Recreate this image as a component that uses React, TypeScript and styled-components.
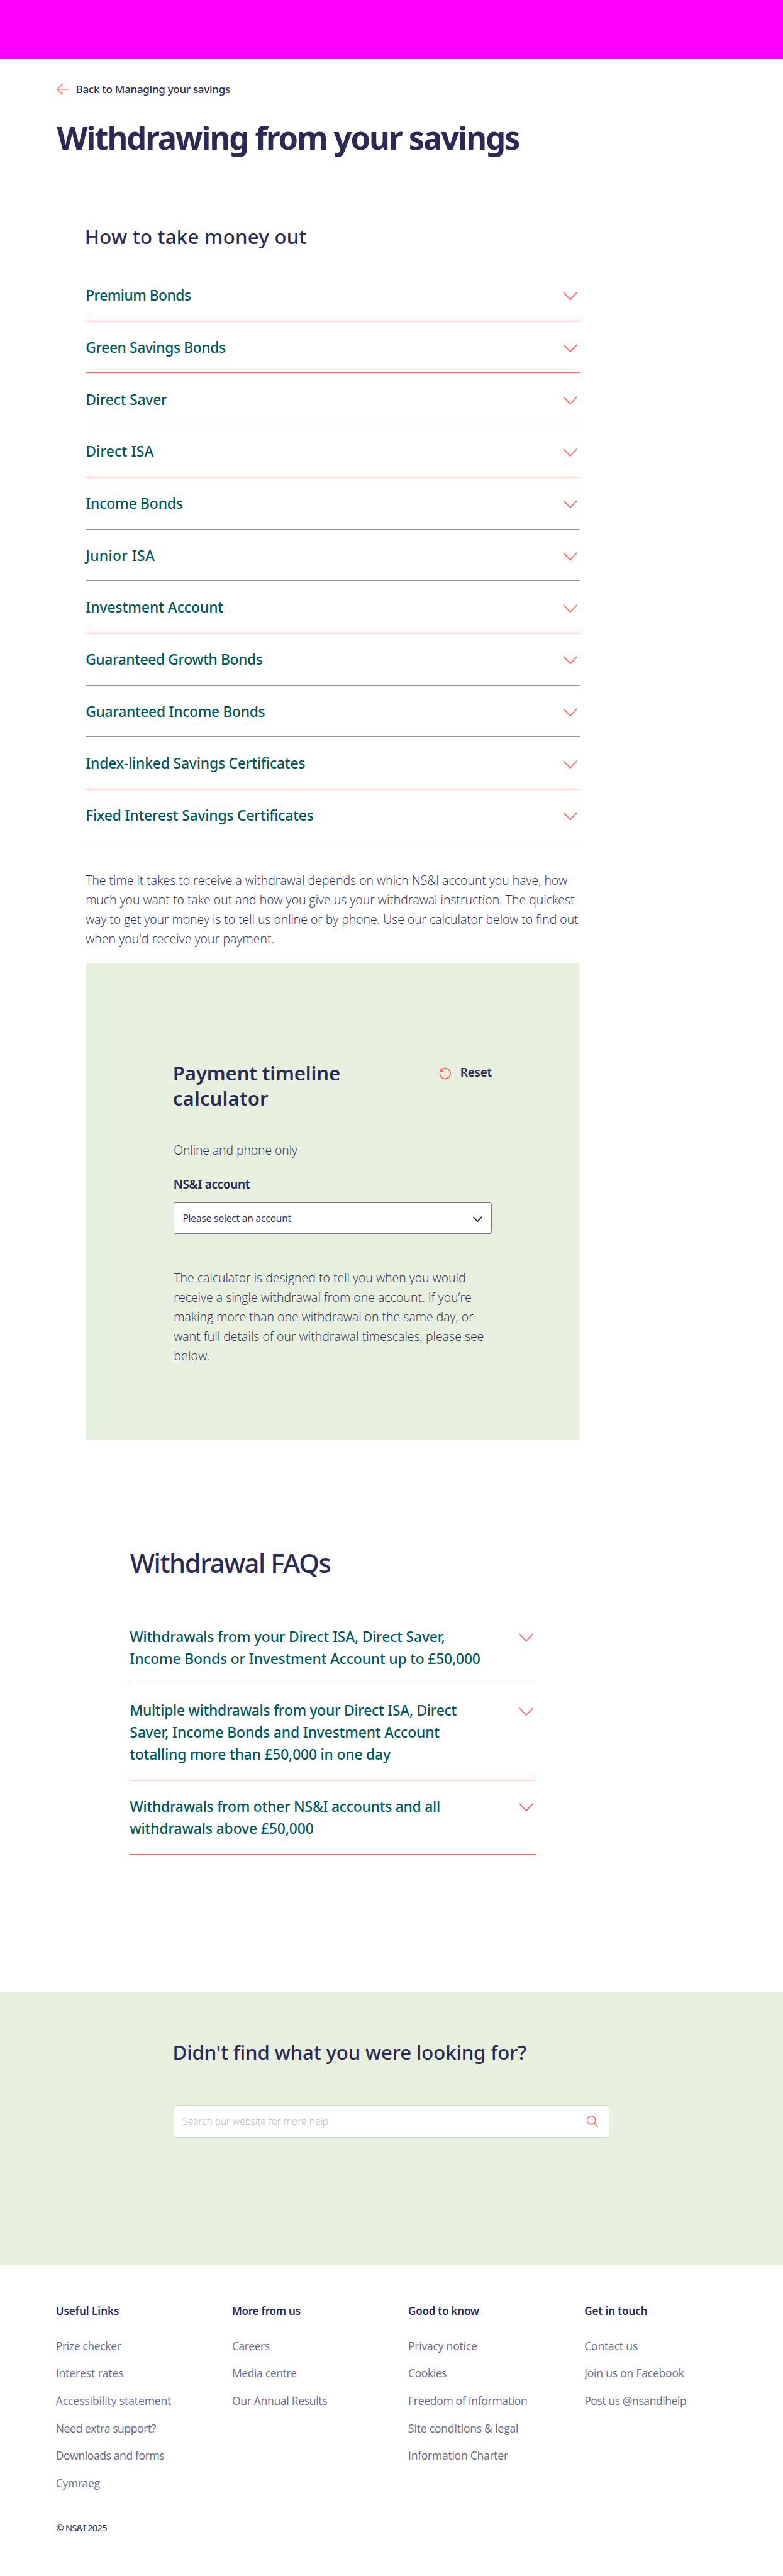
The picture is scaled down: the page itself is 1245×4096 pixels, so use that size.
import React from 'react';
import styled, { createGlobalStyle } from 'styled-components';

const navy = '#2a2a55';
const teal = '#00595a';
const coral = '#ff6561';
const sage = '#e8f0df';

const GlobalStyle = createGlobalStyle`
  html { font-size: 9.728px; background: #fff; }
  body { margin: 0; font-family: "Noto Sans", "Open Sans", sans-serif; color: ${navy}; }
  *, *::before, *::after { box-sizing: border-box; }
  h1, h2, h3, p, ul { margin: 0; padding: 0; font-weight: inherit; }
  ul { list-style: none; }
  a { color: inherit; text-decoration: none; }
  button { font: inherit; color: inherit; background: none; border: 0; padding: 0; text-align: left; }
`;

const Banner = styled.div`
  height: 9.68rem;
  background: #ff00ff;
`;

const Line = styled.span<{ $track?: number }>`
  display: block;
  white-space: nowrap;
  letter-spacing: ${(p) => (p.$track ?? 0) / 10000}em;
`;

const PageHeader = styled.header`
  padding: 3.67rem 9.2rem 0;
`;

const BackLink = styled.a`
  display: flex;
  align-items: center;
  gap: 1rem;
  height: 2.4rem;
  font-size: 1.75rem;
  font-weight: 500;
  line-height: 2.4rem;
  letter-spacing: -0.0171em;
  svg { width: 2.2rem; height: 2rem; flex: none; }
`;

const PageTitle = styled.h1`
  margin-top: 3.6rem;
  padding-left: 0.1rem;
  font-size: 5.2rem;
  font-weight: 700;
  line-height: 6.4rem;
  letter-spacing: -0.0398em;
`;

const Main = styled.main`
  width: 80.8rem;
  margin: 10.91rem 0 0 14rem;
`;

const SectionTitle = styled.h2`
  font-size: 3.2rem;
  font-weight: 500;
  line-height: 4rem;
  letter-spacing: 0.0091em;
  margin-left: -0.15rem;
`;

const Accordion = styled.ul<{ $top: number }>`
  margin-top: ${(p) => p.$top}rem;
`;

const AccordionItem = styled.li`
  border-bottom: 1px solid ${coral};
  padding-bottom: calc(0.1rem - 1px);
`;

const AccordionButton = styled.button`
  display: flex;
  justify-content: space-between;
  align-items: flex-start;
  width: 100%;
  padding: 2.48rem 0.35rem 2.32rem 0;
  color: ${teal};
  font-size: 2.35rem;
  font-weight: 500;
  line-height: 3.6rem;
  svg { width: 2.4rem; height: 1.4rem; margin-top: 1.27rem; flex: none; }
`;

const BodyText = styled.p<{ $top: number }>`
  margin-top: ${(p) => p.$top}rem;
  font-family: "Open Sans", "Noto Sans", sans-serif;
  font-size: 2rem;
  font-weight: 300;
  line-height: 3.2rem;
`;

const Calculator = styled.section`
  margin-top: 2.48rem;
  height: 77.8rem;
  padding: 15.9rem 14.4rem 0;
  background: ${sage};
`;

const CalculatorHead = styled.div`
  display: flex;
  justify-content: space-between;
  align-items: flex-start;
`;

const CalculatorTitle = styled.h3`
  margin-left: -0.15rem;
  font-size: 3.2rem;
  font-weight: 600;
  line-height: 4.1rem;
`;

const ResetButton = styled.button`
  display: flex;
  align-items: center;
  gap: 1.5rem;
  margin-top: 0.3rem;
  font-size: 1.95rem;
  font-weight: 600;
  line-height: 3.2rem;
  letter-spacing: -0.0104em;
  svg { width: 2rem; height: 2rem; margin-top: 0.3rem; flex: none; }
`;

const FieldLabel = styled.div`
  margin-top: 2.5rem;
  margin-left: -0.05rem;
  font-size: 1.95rem;
  font-weight: 600;
  line-height: 3.2rem;
  letter-spacing: -0.0165em;
`;

const SelectBox = styled.div`
  display: flex;
  align-items: center;
  justify-content: space-between;
  height: 5.15rem;
  margin-top: 1.3rem;
  padding: 0 1.5rem 0 1.35rem;
  border: 1px solid #777b7b;
  border-radius: 0.3rem;
  background: #fff;
  font-family: "Open Sans", "Noto Sans", sans-serif;
  font-size: 1.6rem;
  letter-spacing: -0.01em;
  svg { width: 1.5rem; height: 1rem; margin-top: 0.3rem; }
`;

const Faqs = styled.section`
  width: 66.4rem;
  margin: 17.53rem 0 0 21.2rem;
`;

const FaqTitle = styled.h2`
  font-size: 4.3rem;
  font-weight: 500;
  line-height: 5.2rem;
  letter-spacing: -0.0345em;
  padding-left: 0.05rem;
`;

const HelpBand = styled.section`
  margin-top: 22.4rem;
  height: 44.7rem;
  padding: 7.93rem 28.4rem 0;
  background: ${sage};
`;

const HelpTitle = styled.h2`
  margin-left: -0.18rem;
  font-size: 3.2rem;
  font-weight: 500;
  line-height: 4rem;
  white-space: nowrap;
  letter-spacing: -0.0034em;
`;

const SearchBox = styled.div`
  display: flex;
  align-items: center;
  justify-content: space-between;
  height: 5.37rem;
  margin-top: 6.57rem;
  padding: 0 1.65rem 0 1.35rem;
  border: 1px solid #d0d7ca;
  border-radius: 0.4rem;
  background: #fff;
  color: #b6b6bb;
  font-family: "Open Sans", "Noto Sans", sans-serif;
  font-size: 1.6rem;
  font-weight: 300;
  letter-spacing: -0.0041em;
  svg { width: 2rem; height: 2rem; }
`;

const Footer = styled.footer`
  padding: 6.36rem 9.2rem 0;
`;

const FooterColumns = styled.div`
  display: grid;
  grid-template-columns: repeat(4, 28.8rem);
`;

const FooterHeading = styled.h3`
  margin-bottom: 3.3rem;
  font-size: 1.75rem;
  font-weight: 600;
  line-height: 2.4rem;
  margin-left: -0.08rem;
`;

const FooterList = styled.ul`
  display: flex;
  flex-direction: column;
  gap: 2.09rem;
  margin-left: -0.08rem;
  color: #6a6b8a;
  font-family: "Open Sans", "Noto Sans", sans-serif;
  font-size: 1.8rem;
  line-height: 2.4rem;
`;

const Copyright = styled.p`
  margin-top: 5.05rem;
  padding-bottom: 4rem;
  font-size: 1.5rem;
  line-height: 2rem;
  letter-spacing: -0.0462em;
`;

type Text = [string, number];

const products: Text[] = [
  ['Premium Bonds', -245],
  ['Green Savings Bonds', -180],
  ['Direct Saver', -82],
  ['Direct ISA', 76],
  ['Income Bonds', -87],
  ['Junior ISA', 150],
  ['Investment Account', -27],
  ['Guaranteed Growth Bonds', -189],
  ['Guaranteed Income Bonds', -142],
  ['Index-linked Savings Certificates', -78],
  ['Fixed Interest Savings Certificates', -84],
];

const faqs: Text[][] = [
  [
    ['Withdrawals from your Direct ISA, Direct Saver,', -81],
    ['Income Bonds or Investment Account up to £50,000', -79],
  ],
  [
    ['Multiple withdrawals from your Direct ISA, Direct', -125],
    ['Saver, Income Bonds and Investment Account', -70],
    ['totalling more than £50,000 in one day', -80],
  ],
  [
    ['Withdrawals from other NS&I accounts and all', -111],
    ['withdrawals above £50,000', -54],
  ],
];

const intro: Text[] = [
  ['The time it takes to receive a withdrawal depends on which NS&I account you have, how', 1],
  ['much you want to take out and how you give us your withdrawal instruction. The quickest', 4],
  ['way to get your money is to tell us online or by phone. Use our calculator below to find out', -22],
  ["when you'd receive your payment.", 37],
];

const calculatorNote: Text[] = [
  ['The calculator is designed to tell you when you would', 7],
  ['receive a single withdrawal from one account. If you’re', 25],
  ['making more than one withdrawal on the same day, or', 9],
  ['want full details of our withdrawal timescales, please see', 23],
  ['below.', 120],
];

const footer: { heading: Text; links: Text[] }[] = [
  {
    heading: ['Useful Links', -8],
    links: [
      ['Prize checker', -192],
      ['Interest rates', -55],
      ['Accessibility statement', -48],
      ['Need extra support?', -222],
      ['Downloads and forms', -213],
      ['Cymraeg', -192],
    ],
  },
  {
    heading: ['More from us', -126],
    links: [
      ['Careers', -274],
      ['Media centre', -206],
      ['Our Annual Results', -168],
    ],
  },
  {
    heading: ['Good to know', -132],
    links: [
      ['Privacy notice', -119],
      ['Cookies', -231],
      ['Freedom of Information', -163],
      ['Site conditions & legal', -102],
      ['Information Charter', -140],
    ],
  },
  {
    heading: ['Get in touch', -55],
    links: [
      ['Contact us', -90],
      ['Join us on Facebook', -110],
      ['Post us @nsandihelp', -229],
    ],
  },
];

const Chevron = () => (
  <svg viewBox="0 0 24 14" fill="none" stroke={coral} strokeWidth="1.9" strokeLinecap="round">
    <path d="M1.4 1.4 12 12.4 22.6 1.4" />
  </svg>
);

const Lines = ({ items }: { items: Text[] }) => (
  <>
    {items.map(([text, track]) => (
      <Line key={text} $track={track}>{text}</Line>
    ))}
  </>
);

const Panel = ({ items }: { items: Text[] }) => (
  <AccordionItem>
    <AccordionButton>
      <span><Lines items={items} /></span>
      <Chevron />
    </AccordionButton>
  </AccordionItem>
);

export default function App() {
  return (
    <>
      <GlobalStyle />
      <Banner />
      <PageHeader>
        <BackLink href="#">
          <svg viewBox="0 0 22 20" fill="none" stroke={coral} strokeWidth="1.7" strokeLinecap="round" strokeLinejoin="round">
            <path d="M21 10H2.6M10.6 1.8 2.4 10l8.2 8.2" />
          </svg>
          Back to Managing your savings
        </BackLink>
        <PageTitle>Withdrawing from your savings</PageTitle>
      </PageHeader>
      <Main>
        <SectionTitle>How to take money out</SectionTitle>
        <Accordion $top={3.34}>
          {products.map((p) => <Panel key={p[0]} items={[p]} />)}
        </Accordion>
        <BodyText $top={4.72}><Lines items={intro} /></BodyText>
        <Calculator>
          <CalculatorHead>
            <CalculatorTitle>
              <Line $track={-39}>Payment timeline</Line>
              <Line $track={45}>calculator</Line>
            </CalculatorTitle>
            <ResetButton>
              <svg viewBox="0 0 20 20" fill="none" stroke={coral} strokeWidth="1.7" strokeLinecap="round" strokeLinejoin="round">
                <path d="M1.4 10.8a8.6 8.6 0 1 0 2.1-6.2L1.8 6.3M1.8 1.8v4.5h4.4" />
              </svg>
              Reset
            </ResetButton>
          </CalculatorHead>
          <BodyText $top={4.75}><Line $track={-50}>Online and phone only</Line></BodyText>
          <FieldLabel>NS&amp;I account</FieldLabel>
          <SelectBox>
            Please select an account
            <svg viewBox="0 0 15 10" fill="none" stroke="#111" strokeWidth="1.7" strokeLinecap="round">
              <path d="M1.1 1.4 7.5 8.6l6.4-7.2" />
            </svg>
          </SelectBox>
          <BodyText $top={5.52}><Lines items={calculatorNote} /></BodyText>
        </Calculator>
      </Main>
      <Faqs>
        <FaqTitle>Withdrawal FAQs</FaqTitle>
        <Accordion $top={5.17}>
          {faqs.map((f) => <Panel key={f[0][0]} items={f} />)}
        </Accordion>
      </Faqs>
      <HelpBand>
        <HelpTitle>Didn't find what you were looking for?</HelpTitle>
        <SearchBox>
          Search our website for more help
          <svg viewBox="0 0 20 20" fill="none" stroke={coral} strokeWidth="1.6" strokeLinecap="round">
            <circle cx="8.4" cy="8.4" r="6.9" />
            <path d="m13.4 13.6 5.2 5.2" />
          </svg>
        </SearchBox>
      </HelpBand>
      <Footer>
        <FooterColumns>
          {footer.map(({ heading, links }) => (
            <div key={heading[0]}>
              <FooterHeading><Line $track={heading[1]}>{heading[0]}</Line></FooterHeading>
              <FooterList>
                {links.map(([text, track]) => (
                  <li key={text}><a href="#"><Line $track={track}>{text}</Line></a></li>
                ))}
              </FooterList>
            </div>
          ))}
        </FooterColumns>
        <Copyright>© NS&amp;I 2025</Copyright>
      </Footer>
    </>
  );
}
